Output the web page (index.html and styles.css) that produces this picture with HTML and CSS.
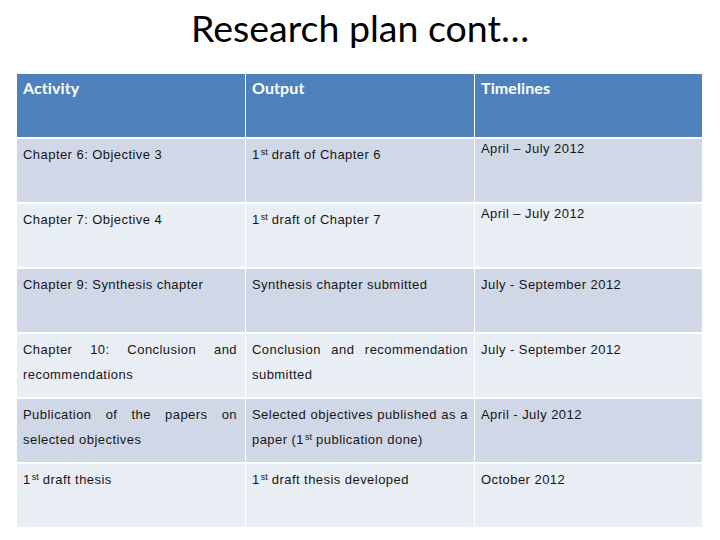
FILE: index.html
```html
<!DOCTYPE html>
<html>
<head>
<meta charset="utf-8">
<link rel="stylesheet" href="styles.css">
</head>
<body>
<h1 class="title">Research plan cont…</h1>
<div class="table">
  <div class="cell head">Activity</div>
  <div class="cell head">Output</div>
  <div class="cell head">Timelines</div>

  <div class="cell odd">Chapter 6: Objective 3</div>
  <div class="cell odd">1<sup>st</sup> draft of Chapter 6</div>
  <div class="cell odd high">April – July 2012</div>

  <div class="cell even">Chapter 7: Objective 4</div>
  <div class="cell even">1<sup>st</sup> draft of Chapter 7</div>
  <div class="cell even high">April – July 2012</div>

  <div class="cell odd">Chapter 9: Synthesis chapter</div>
  <div class="cell odd">Synthesis chapter submitted</div>
  <div class="cell odd">July - September 2012</div>

  <div class="cell even just">Chapter 10: Conclusion and recommendations</div>
  <div class="cell even just">Conclusion and recommendation submitted</div>
  <div class="cell even">July - September 2012</div>

  <div class="cell odd just">Publication of the papers on selected objectives</div>
  <div class="cell odd just">Selected objectives published as a paper (1<sup>st</sup> publication done)</div>
  <div class="cell odd">April - July 2012</div>

  <div class="cell even">1<sup>st</sup> draft thesis</div>
  <div class="cell even">1<sup>st</sup> draft thesis developed</div>
  <div class="cell even">October 2012</div>
</div>
</body>
</html>
```
FILE: styles.css
```css
html, body {
  margin: 0;
  padding: 0;
  background: #ffffff;
}
body {
  width: 720px;
  height: 540px;
  overflow: hidden;
  font-family: "Liberation Sans", Arial, sans-serif;
  color: #161616;
}
.title {
  margin: 0;
  height: 74px;
  padding-top: 4px;
  box-sizing: border-box;
  text-align: center;
  font-family: Lato, "Open Sans", sans-serif;
  font-weight: 400;
  font-size: 37.5px;
  line-height: 48px;
  color: #000000;
}
.table {
  margin-left: 17px;
  width: 685px;
  display: grid;
  grid-template-columns: 228px 228px 227px;
  grid-template-rows: 63px repeat(6, 63px);
  column-gap: 1px;
  row-gap: 2px;
  background: #ffffff;
}
.cell {
  box-sizing: border-box;
  padding: 3px 6px 0 6px;
  font-size: 13px;
  letter-spacing: 0.45px;
  line-height: 25px;
}
.cell sup {
  display: inline-block;
  font-size: 9px;
  letter-spacing: 0;
  line-height: 9px;
  vertical-align: 4px;
  margin-left: 1px;
}
.head {
  background: #4f81bd;
  color: #ffffff;
  font-family: Lato, "Open Sans", sans-serif;
  font-weight: 700;
  font-size: 16px;
  letter-spacing: 0.1px;
  line-height: 24px;
  padding-top: 2px;
}
.odd {
  background: #d0d8e8;
}
.even {
  background: #e9edf4;
}
.high {
  padding-top: 0;
  line-height: 20px;
}
.just {
  text-align: justify;
  padding-right: 8px;
}
.just + .just {
  padding-right: 6px;
}
```
